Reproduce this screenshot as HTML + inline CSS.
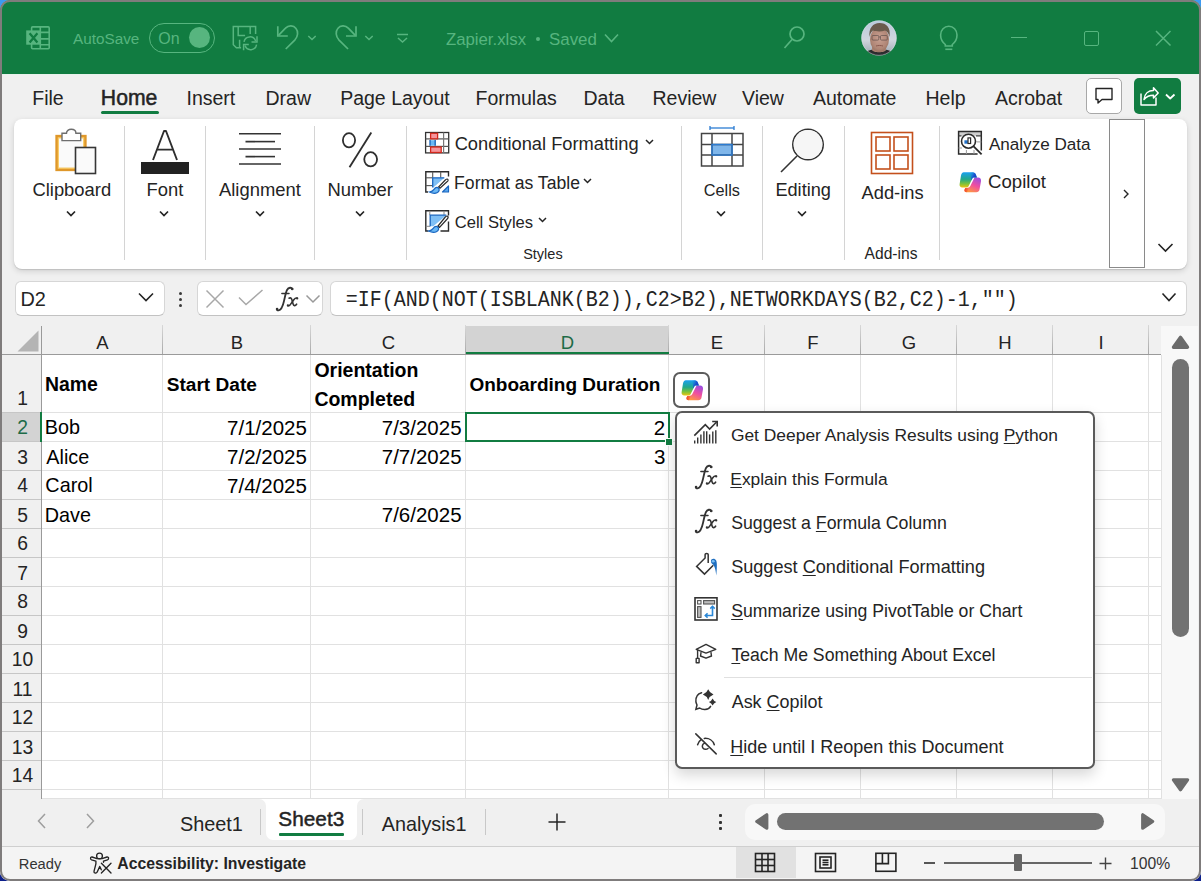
<!DOCTYPE html>
<html><head><meta charset="utf-8"><style>
html,body{margin:0;padding:0;width:1201px;height:881px;overflow:hidden;}
body{background:linear-gradient(180deg,#3d9af2 0%,#2a6fe0 50%,#0d1f8a 100%);position:relative;}
u{text-decoration:underline;text-decoration-thickness:1px;text-underline-offset:2px;}
</style></head><body>
<div style="position:absolute;left:0;top:0;width:1201px;height:881px;border-radius:10px;overflow:hidden;background:#f0f0f0;">
<div style="position:absolute;left:0px;top:0px;width:1201px;height:74px;background:#117c41;"></div><div style="position:absolute;left:0px;top:74px;width:1201px;height:1px;background:#e8f2ec;"></div><svg style="position:absolute;left:24px;top:25px;" width="28" height="26" viewBox="0 0 28 26"><g fill="none" stroke="#57b57f" stroke-width="1.6">
<rect x="7.6" y="1.9" width="17.6" height="21.9" rx="1"/>
<line x1="16.3" y1="1.9" x2="16.3" y2="23.8"/>
<line x1="16.3" y1="7.4" x2="25.2" y2="7.4"/><line x1="16.3" y1="13.9" x2="25.2" y2="13.9"/><line x1="16.3" y1="19.7" x2="25.2" y2="19.7"/>
</g>
<rect x="2.2" y="5.4" width="14.3" height="14.3" fill="#57b57f"/>
<path d="M5.6 8.3 L13.4 17.6 M13.4 8.3 L5.6 17.6" stroke="#117c41" stroke-width="2.3"/></svg><div style="position:absolute;left:149px;top:23.3px;width:65.5px;height:29.5px;box-sizing:border-box;border:1.6px solid #57b57f;border-radius:15px;"></div><div style="position:absolute;left:189px;top:26.8px;width:21px;height:21px;border-radius:50%;background:#57b57f;"></div><svg style="position:absolute;left:228px;top:22px;" width="34" height="32" viewBox="0 0 34 32"><g fill="none" stroke="#57b57f" stroke-width="1.5">
<path d="M13.1 25.8 H8.4 L5.3 22.7 V4.5 H27.6 V12"/>
<path d="M10.2 4.5 V13.5 H17.1 M22.2 4.5 V12"/>
<path d="M11.6 17.8 V25.8"/>
<path d="M16 19.8 A6 6 0 0 1 27.6 19"/><path d="M29 14.3 V20 H23.5"/>
<path d="M28.6 22.6 A6 6 0 0 1 17 23.6"/><path d="M15.6 28.2 V22.6 H20.8"/>
</g></svg><svg style="position:absolute;left:272px;top:22px;" width="34" height="32" viewBox="0 0 34 32"><g fill="none" stroke="#57b57f" stroke-width="1.7">
<path d="M5.8 4.2 V14 H15.8"/>
<path d="M6.5 13.3 L13.5 6.2 C16.5 3 21.5 3.2 24 6.5 C26.5 9.5 26 14.5 23 17.8 L13.75 27"/></g></svg><svg style="position:absolute;left:300px;top:22px;" width="16" height="32" viewBox="0 0 16 32"><path d="M8.3 14 L12 17.5 L15.7 14" fill="none" stroke="#57b57f" stroke-width="1.5"/></svg><svg style="position:absolute;left:328px;top:22px;" width="34" height="32" viewBox="0 0 34 32"><g transform="translate(33.8,0) scale(-1,1)"><g fill="none" stroke="#57b57f" stroke-width="1.7">
<path d="M5.8 4.2 V14 H15.8"/>
<path d="M6.5 13.3 L13.5 6.2 C16.5 3 21.5 3.2 24 6.5 C26.5 9.5 26 14.5 23 17.8 L13.75 27"/></g></g></svg><svg style="position:absolute;left:357px;top:22px;" width="16" height="32" viewBox="0 0 16 32"><path d="M8.3 14 L12 17.5 L15.7 14" fill="none" stroke="#57b57f" stroke-width="1.5"/></svg><svg style="position:absolute;left:395px;top:32px;" width="15" height="12" viewBox="0 0 15 12"><g fill="none" stroke="#57b57f" stroke-width="1.5"><line x1="2" y1="2.5" x2="13" y2="2.5"/><path d="M3 6 L7.5 10 L12 6"/></g></svg><div style="position:absolute;left:536px;top:37px;width:4.2px;height:4.2px;border-radius:50%;background:#57b57f;"></div><svg style="position:absolute;left:603px;top:32px;" width="17" height="12" viewBox="0 0 17 12"><path d="M2 2.5 L8.5 9.5 L15 2.5" fill="none" stroke="#57b57f" stroke-width="1.6"/></svg><svg style="position:absolute;left:782px;top:25px;" width="24" height="25" viewBox="0 0 24 25"><g fill="none" stroke="#57b57f" stroke-width="1.7"><circle cx="15" cy="9" r="7"/><line x1="10" y1="14.5" x2="2.5" y2="23"/></g></svg><svg style="position:absolute;left:861px;top:20px;" width="36" height="36" viewBox="0 0 36 36"><defs><clipPath id="avc"><circle cx="18" cy="18" r="17.6"/></clipPath>
<radialGradient id="avf" cx="0.5" cy="0.45" r="0.6"><stop offset="0" stop-color="#c9a092"/><stop offset="0.7" stop-color="#b08676"/><stop offset="1" stop-color="#92705f"/></radialGradient>
<linearGradient id="avb" x1="0" y1="0" x2="0" y2="1"><stop offset="0" stop-color="#b9c8da"/><stop offset="0.55" stop-color="#d0d6de"/><stop offset="1" stop-color="#9aa3ad"/></linearGradient></defs>
<g clip-path="url(#avc)">
<rect width="36" height="36" fill="url(#avb)"/>
<path d="M2 36 C4 31 9 29 18 29 C27 29 32 31 34 36 Z" fill="#2c2c2e"/>
<path d="M11 30 C12 33 24 33 25 30 V26 H11 Z" fill="#a98070"/>
<ellipse cx="18.5" cy="19.5" rx="9.5" ry="12.5" fill="url(#avf)"/>
<path d="M8.5 17 C7.5 8 12 3 18.5 3 C25.5 3 30 7.5 28.5 17 C27.5 13 26 11 24 10.5 C20 12 15 11.5 12 10.5 C10 12 9 14 8.5 17 Z" fill="#6a5a4c"/>
<g fill="none" stroke="#4a4040" stroke-width="0.7" opacity="0.8"><rect x="11" y="15.5" width="6.8" height="4.6" rx="1"/><rect x="19.5" y="15.5" width="6.8" height="4.6" rx="1"/><line x1="17.8" y1="17" x2="19.5" y2="17"/></g>
<path d="M15 26 C17 25.3 20 25.3 22 26" stroke="#8a5a50" stroke-width="1" fill="none"/>
</g>
<circle cx="18" cy="18" r="17.3" fill="none" stroke="#d8e6ea" stroke-width="0.6" opacity="0.7"/></svg><svg style="position:absolute;left:937px;top:24px;" width="24" height="28" viewBox="0 0 24 28"><g fill="none" stroke="#57b57f" stroke-width="1.6">
<path d="M8.3 20.5 C5.8 18.5 3.6 15.5 3.6 11 C3.6 6 7.3 2.3 11.8 2.3 C16.3 2.3 20 6 20 11 C20 15.5 17.8 18.5 15.3 20.5 V22 H8.3 Z"/>
<line x1="8.3" y1="25.3" x2="15.3" y2="25.3"/>
</g></svg><div style="position:absolute;left:1011px;top:36.5px;width:16px;height:1.5px;background:#57b57f;"></div><div style="position:absolute;left:1083.5px;top:30.5px;width:15px;height:15px;box-sizing:border-box;border:1.5px solid #57b57f;border-radius:2px;"></div><svg style="position:absolute;left:1154px;top:29px;" width="18" height="18" viewBox="0 0 18 18"><path d="M2 2 L16.5 16.5 M16.5 2 L2 16.5" stroke="#57b57f" stroke-width="1.5"/></svg><div style="position:absolute;left:0px;top:75px;width:1201px;height:252px;background:#f0f0f0;"></div><div style="position:absolute;left:101px;top:110.5px;width:58px;height:3px;background:#117c41;border-radius:2px;"></div><div style="position:absolute;left:1086px;top:78px;width:36px;height:36px;box-sizing:border-box;background:#fff;border:1px solid #a8a8a8;border-radius:5px;"></div><svg style="position:absolute;left:1094px;top:87px;" width="20" height="18" viewBox="0 0 20 18"><path d="M2 1.5 H18 V12.5 H8 L4 16 V12.5 H2 Z" fill="none" stroke="#242424" stroke-width="1.4" stroke-linejoin="round"/></svg><div style="position:absolute;left:1134px;top:78px;width:47px;height:36px;background:#117c41;border-radius:5px;"></div><svg style="position:absolute;left:1134px;top:78px;" width="46" height="36" viewBox="0 0 46 36"><g fill="none" stroke="#fff" stroke-width="1.5" stroke-linejoin="round">
<path d="M7 15.5 V27 H22 V19.5"/>
<path d="M10 21.5 C10.5 15.5 14.5 12.5 19.5 12.5 V9.8 L24.2 15 L19.5 20 V17.3 C15.5 17.3 12.5 18.5 10 21.5 Z"/>
<path d="M32 16.5 L36.2 20.5 L40.5 16.5" stroke-width="1.8"/>
</g></svg><div style="position:absolute;left:14px;top:119px;width:1172.5px;height:150px;background:#fff;border-radius:8px;box-shadow:0 1px 1px rgba(0,0,0,0.12),0 2px 6px rgba(0,0,0,0.14);"></div><div style="position:absolute;left:124px;top:126px;width:1px;height:134px;background:#d4d4d4;"></div><div style="position:absolute;left:205px;top:126px;width:1px;height:134px;background:#d4d4d4;"></div><div style="position:absolute;left:314px;top:126px;width:1px;height:134px;background:#d4d4d4;"></div><div style="position:absolute;left:406px;top:126px;width:1px;height:134px;background:#d4d4d4;"></div><div style="position:absolute;left:681px;top:126px;width:1px;height:134px;background:#d4d4d4;"></div><div style="position:absolute;left:762px;top:126px;width:1px;height:134px;background:#d4d4d4;"></div><div style="position:absolute;left:844px;top:126px;width:1px;height:134px;background:#d4d4d4;"></div><div style="position:absolute;left:939px;top:126px;width:1px;height:134px;background:#d4d4d4;"></div><div style="position:absolute;left:1109.3px;top:119.3px;width:35.3px;height:149px;box-sizing:border-box;border:1px solid #8a8a8a;background:#fff;"></div><svg style="position:absolute;left:1121px;top:188px;" width="10" height="12" viewBox="0 0 10 12"><path d="M3 2 L7 6 L3 10" fill="none" stroke="#242424" stroke-width="1.4"/></svg><svg style="position:absolute;left:1156px;top:241px;" width="19" height="13" viewBox="0 0 19 13"><path d="M2.5 3 L9.5 10 L16.5 3" fill="none" stroke="#242424" stroke-width="1.6"/></svg><svg style="position:absolute;left:52px;top:126px;" width="48" height="50" viewBox="0 0 48 50">
<rect x="5" y="10.5" width="28" height="33" fill="#fafafa" stroke="#df972a" stroke-width="3.3"/>
<rect x="6.3" y="11.8" width="25.4" height="30.4" fill="none" stroke="#fcd06a" stroke-width="1.1"/>
<path d="M10 14.6 V7.2 H14.5 C14.5 4.8 16.6 3.3 19.2 3.3 C21.8 3.3 23.9 4.8 23.9 7.2 H28.7 V14.6 Z" fill="#fff" stroke="#6e6e6e" stroke-width="1.4"/>
<rect x="23.5" y="21.5" width="20" height="26" fill="#fafafa" stroke="#363636" stroke-width="1.6"/>
</svg><svg style="position:absolute;left:65px;top:208.5px;" width="12" height="9" viewBox="0 0 12 9"><path d="M2 2.5 L6 6.5 L10 2.5" fill="none" stroke="#242424" stroke-width="1.7"/></svg><svg style="position:absolute;left:140px;top:127px;" width="51" height="49" viewBox="0 0 51 49"><path d="M13 33 L24 4 H26 L37 33 M17.3 22.6 H32.7" fill="none" stroke="#2e2e2e" stroke-width="1.9" stroke-linejoin="round"/>
<rect x="1" y="35" width="48" height="12" fill="#222"/></svg><svg style="position:absolute;left:158px;top:208.5px;" width="12" height="9" viewBox="0 0 12 9"><path d="M2 2.5 L6 6.5 L10 2.5" fill="none" stroke="#242424" stroke-width="1.7"/></svg><svg style="position:absolute;left:237px;top:131px;" width="46" height="36" viewBox="0 0 46 36"><g stroke="#333" stroke-width="1.6"><line x1="2" y1="2.7" x2="44" y2="2.7"/><line x1="8.5" y1="10.6" x2="38" y2="10.6"/><line x1="2" y1="18" x2="44" y2="18"/><line x1="8.5" y1="25.6" x2="38" y2="25.6"/><line x1="2" y1="33" x2="44" y2="33"/></g></svg><svg style="position:absolute;left:253.5px;top:208.5px;" width="12" height="9" viewBox="0 0 12 9"><path d="M2 2.5 L6 6.5 L10 2.5" fill="none" stroke="#242424" stroke-width="1.7"/></svg><svg style="position:absolute;left:340px;top:130px;" width="40" height="40" viewBox="0 0 40 40"><g fill="none" stroke="#2e2e2e" stroke-width="1.8"><ellipse cx="9" cy="10.3" rx="6.1" ry="7.1"/><ellipse cx="30.65" cy="29.3" rx="6.4" ry="7.1"/><line x1="31.3" y1="2.5" x2="9.5" y2="37.2"/></g></svg><svg style="position:absolute;left:353.5px;top:208.5px;" width="12" height="9" viewBox="0 0 12 9"><path d="M2 2.5 L6 6.5 L10 2.5" fill="none" stroke="#242424" stroke-width="1.7"/></svg><svg style="position:absolute;left:420px;top:126px;" width="36" height="32" viewBox="0 0 36 32">
<rect x="5.6" y="6.5" width="23.1" height="20.4" fill="#fff" stroke="#333" stroke-width="1.3"/>
<g stroke="#555" stroke-width="1.2"><line x1="5.6" y1="12.9" x2="28.7" y2="12.9"/><line x1="5.6" y1="20.4" x2="28.7" y2="20.4"/></g>
<line x1="23.6" y1="6.5" x2="23.6" y2="26.9" stroke="#777" stroke-width="1.2"/>
<rect x="10.6" y="7.3" width="7" height="5.5" fill="#f6949b" stroke="#d2281c" stroke-width="1.3"/>
<rect x="10.6" y="21" width="10.6" height="5.5" fill="#f6949b" stroke="#d2281c" stroke-width="1.3"/>
<rect x="10" y="14.2" width="5.3" height="5.5" fill="#6ab8f5"/>
<g stroke="#1461b8" stroke-width="1.3"><line x1="10" y1="14" x2="10" y2="19.8"/><line x1="15.2" y1="14" x2="15.2" y2="19.8"/></g>
</svg><svg style="position:absolute;left:643px;top:137px;" width="13" height="10" viewBox="0 0 13 10"><path d="M3 3 L6.5 6.5 L10 3" fill="none" stroke="#242424" stroke-width="1.5"/></svg><svg style="position:absolute;left:420px;top:166px;" width="36" height="32" viewBox="0 0 36 32">
<path d="M8 26 H5.8 V5.8 H28.5 V10.5" fill="none" stroke="#2b2b2b" stroke-width="1.4"/>
<g stroke="#555" stroke-width="1.1"><line x1="5.8" y1="11.8" x2="13" y2="11.8"/><line x1="5.8" y1="19.6" x2="13" y2="19.6"/><line x1="12.7" y1="5.8" x2="12.7" y2="11.8"/><line x1="20.7" y1="5.8" x2="20.7" y2="11.8"/></g>
<path d="M12.7 11.8 H24.5 L13 21.8 Z" fill="#7fbff5"/>
<path d="M24.3 11.8 H12.7 V21.5" fill="none" stroke="#1a66c0" stroke-width="1.3"/>
<path d="M22.5 26 L28.5 20 V26 Z" fill="#5aa8ee" stroke="#1a66c0" stroke-width="1.2" stroke-linejoin="round"/>
<path d="M27.6 13.2 C28.6 14.2 28 15 27 15.8 L20 22.3 L18.6 21 L25.3 14 C26.2 13.2 26.9 12.6 27.6 13.2 Z" fill="#fff" stroke="#2b2b2b" stroke-width="1.2"/>
<path d="M17.8 21.6 C19.8 22.6 19.8 25.5 17 26.8 C15 27.7 12.5 27.5 9.5 26 C12 25.6 13 24.8 14 23.3 C15 21.8 16.4 21 17.8 21.6 Z" fill="#6ab8f5" stroke="#1a66c0" stroke-width="1.2"/>
</svg><svg style="position:absolute;left:581px;top:176px;" width="13" height="10" viewBox="0 0 13 10"><path d="M3 3 L6.5 6.5 L10 3" fill="none" stroke="#242424" stroke-width="1.5"/></svg><svg style="position:absolute;left:420px;top:205px;" width="36" height="32" viewBox="0 0 36 32">
<path d="M8.5 26 H5.8 V5.8 H28.5 V10.5 M28.5 16.5 V26 H20.5" fill="none" stroke="#2b2b2b" stroke-width="1.4"/>
<g stroke="#888" stroke-width="1"><line x1="9.8" y1="5.8" x2="9.8" y2="10.2"/><line x1="24" y1="5.8" x2="24" y2="10.2"/><line x1="5.8" y1="21.3" x2="10.2" y2="21.3"/></g>
<path d="M10.2 10.2 H26.3 L13.3 21.3 H10.2 Z" fill="#7fbff5"/>
<path d="M26.3 10.2 H10.2 V21.3" fill="none" stroke="#1a66c0" stroke-width="1.3"/>
<path d="M27.6 11.2 C28.6 12.2 28.2 13 27.2 14 L19.5 22.3 L18 21 L25.3 12 C26.2 11.2 26.9 10.6 27.6 11.2 Z" fill="#fff" stroke="#2b2b2b" stroke-width="1.2"/>
<path d="M17.2 21.6 C19.2 22.6 19.2 25.5 16.4 26.8 C14.4 27.7 11.5 27.5 8.5 26 C11 25.6 12.2 24.8 13.2 23.3 C14.2 21.8 15.8 21 17.2 21.6 Z" fill="#6ab8f5" stroke="#1a66c0" stroke-width="1.2"/>
</svg><svg style="position:absolute;left:536px;top:215px;" width="13" height="10" viewBox="0 0 13 10"><path d="M3 3 L6.5 6.5 L10 3" fill="none" stroke="#242424" stroke-width="1.5"/></svg><svg style="position:absolute;left:700px;top:124px;" width="45" height="44" viewBox="0 0 45 44">
<g stroke="#2b7cd3" stroke-width="1.3"><line x1="10" y1="4" x2="34" y2="4"/><line x1="10" y1="2" x2="10" y2="6"/><line x1="34" y1="2" x2="34" y2="6"/></g>
<rect x="12" y="20.5" width="20" height="10.5" fill="#7fb6ea"/>
<g stroke="#444" stroke-width="1.5" fill="none"><rect x="1.5" y="9.5" width="41.5" height="32.5"/><line x1="12" y1="9.5" x2="12" y2="42"/><line x1="32" y1="9.5" x2="32" y2="42"/><line x1="1.5" y1="20.5" x2="43" y2="20.5"/><line x1="1.5" y1="31" x2="43" y2="31"/></g>
<rect x="12" y="20.5" width="20" height="10.5" fill="none" stroke="#2b7cd3" stroke-width="1.5"/>
</svg><svg style="position:absolute;left:715px;top:208.5px;" width="12" height="9" viewBox="0 0 12 9"><path d="M2 2.5 L6 6.5 L10 2.5" fill="none" stroke="#242424" stroke-width="1.7"/></svg><svg style="position:absolute;left:778px;top:127px;" width="48" height="48" viewBox="0 0 48 48"><g fill="none" stroke="#333" stroke-width="1.6"><circle cx="30" cy="17.5" r="15.2"/><line x1="19" y1="29" x2="3" y2="45"/></g><circle cx="30" cy="17.5" r="14.4" fill="#f6f6f6"/></svg><svg style="position:absolute;left:796px;top:208.5px;" width="12" height="9" viewBox="0 0 12 9"><path d="M2 2.5 L6 6.5 L10 2.5" fill="none" stroke="#242424" stroke-width="1.7"/></svg><svg style="position:absolute;left:869px;top:130px;" width="46" height="46" viewBox="0 0 46 46"><g fill="none" stroke="#c4501c" stroke-width="1.6"><rect x="2.5" y="2.5" width="41" height="41"/><rect x="7" y="7" width="14" height="14"/><rect x="25" y="7" width="14" height="14"/><rect x="7" y="25" width="14" height="14"/><rect x="25" y="25" width="14" height="14"/></g></svg><svg style="position:absolute;left:954px;top:127px;" width="32" height="32" viewBox="0 0 32 32">
<rect x="5" y="5" width="22.2" height="4" fill="#cfcfcf"/>
<path d="M23.6 27 H4.6 V4.6 H27.3 V23.6" fill="none" stroke="#2b2b2b" stroke-width="1.5"/>
<g stroke="#3a3a3a" stroke-width="1.2"><line x1="4.6" y1="8.9" x2="7.5" y2="8.9"/><line x1="22" y1="8.9" x2="27.3" y2="8.9"/></g>
<g stroke="#9a9a9a" stroke-width="1"><line x1="12.4" y1="23" x2="12.4" y2="27"/><line x1="20" y1="23" x2="20" y2="27"/><line x1="22.5" y1="14.9" x2="27.3" y2="14.9"/><line x1="4.6" y1="21" x2="8" y2="21"/></g>
<circle cx="14.5" cy="14.2" r="7" fill="#fff" stroke="#2b2b2b" stroke-width="1.6"/>
<line x1="19.6" y1="19.4" x2="27.6" y2="27.4" stroke="#2b2b2b" stroke-width="1.9"/>
<rect x="10.4" y="13.3" width="3.4" height="3.4" fill="#1f6fc8"/>
<rect x="14" y="10.9" width="2.6" height="5.6" fill="#fff" stroke="#2b2b2b" stroke-width="1.2"/>
</svg><svg style="position:absolute;left:958.8px;top:171.5px;" width="23" height="21" viewBox="0 0 23 21"><defs>
<linearGradient id="crA" x1="0" y1="0" x2="0" y2="1"><stop offset="0" stop-color="#1aa0f0"/><stop offset="0.45" stop-color="#22a88a"/><stop offset="0.75" stop-color="#7cc23a"/><stop offset="1" stop-color="#f2c40f"/></linearGradient>
<linearGradient id="crB" x1="0.8" y1="0" x2="0.3" y2="1"><stop offset="0" stop-color="#9a4de0"/><stop offset="0.5" stop-color="#f04fa0"/><stop offset="1" stop-color="#ff9a3e"/></linearGradient>
<linearGradient id="crC" x1="0" y1="0" x2="1" y2="0.6"><stop offset="0" stop-color="#1a8ce8" stop-opacity="0"/><stop offset="0.6" stop-color="#1a4fd0"/><stop offset="1" stop-color="#1a3cc0"/></linearGradient>
<linearGradient id="crD" x1="0" y1="0" x2="1" y2="0"><stop offset="0" stop-color="#f0402a"/><stop offset="1" stop-color="#f0402a" stop-opacity="0"/></linearGradient>
</defs>
<g transform="translate(0.5,0.3)">
<path d="M16.3 5.3 H18.6 C20.6 5.3 21.9 7 21.5 9 L20 17.2 C19.7 18.9 18.5 20 16.8 20 H7.2 C5.5 20 4.5 18.8 5.1 17.3 L5.8 15.6 H7.6 C9 15.6 10.2 14.9 10.8 13.6 L14.3 6.6 C14.7 5.8 15.4 5.3 16.3 5.3 Z" fill="url(#crB)"/>
<path d="M5.8 15.6 H7.6 C8.5 15.6 9.2 15.3 9.8 14.8 L7.6 20 H7.2 C5.5 20 4.5 18.8 5.1 17.3 Z" fill="url(#crD)"/>
<path d="M4.3 0 H13 C14.8 0 15.9 1 16.5 2.6 L17.4 5.3 H14.4 C13.6 5.3 13 5.8 12.7 6.5 L9.2 13.6 C8.6 14.8 7.7 15.3 6.5 15.3 H2.8 C1 15.3 -0.3 13.8 0.1 12 L1.5 3.2 C1.8 1.3 2.8 0 4.3 0 Z" fill="url(#crA)"/>
<path d="M10.5 0 H13 C14.8 0 15.9 1 16.5 2.6 L17.4 5.3 H14.4 C13.6 5.3 13 5.8 12.7 6.5 L11.8 8.3 Z" fill="url(#crC)"/>
</g></svg><div style="position:absolute;left:14.5px;top:281px;width:150.5px;height:35px;box-sizing:border-box;background:#fff;border:1px solid #d6d6d6;border-bottom-color:#c2c2c2;border-radius:6px;"></div><svg style="position:absolute;left:136px;top:290px;" width="20" height="14" viewBox="0 0 20 14"><path d="M3 3.5 L10 10.5 L17 3.5" fill="none" stroke="#242424" stroke-width="1.6"/></svg><div style="position:absolute;left:179px;top:291.5px;width:3.2px;height:3.2px;background:#3a3a3a;border-radius:50%;"></div><div style="position:absolute;left:179px;top:297.5px;width:3.2px;height:3.2px;background:#3a3a3a;border-radius:50%;"></div><div style="position:absolute;left:179px;top:303.5px;width:3.2px;height:3.2px;background:#3a3a3a;border-radius:50%;"></div><div style="position:absolute;left:196.5px;top:281px;width:126.5px;height:35px;box-sizing:border-box;background:#fff;border:1px solid #d6d6d6;border-bottom-color:#c2c2c2;border-radius:6px;"></div><svg style="position:absolute;left:204px;top:288px;" width="22" height="22" viewBox="0 0 22 22"><path d="M2.5 2.5 L19.5 19.5 M19.5 2.5 L2.5 19.5" stroke="#a8a8a8" stroke-width="1.5"/></svg><svg style="position:absolute;left:237px;top:288px;" width="28" height="20" viewBox="0 0 28 20"><path d="M2 9.5 L9 16.5 L25.5 2" fill="none" stroke="#a8a8a8" stroke-width="1.5"/></svg><svg style="position:absolute;left:304px;top:293px;" width="18" height="12" viewBox="0 0 18 12"><path d="M2.5 2.5 L9 9 L15.5 2.5" fill="none" stroke="#999" stroke-width="1.5"/></svg><div style="position:absolute;left:330px;top:281px;width:856.5px;height:35px;box-sizing:border-box;background:#fff;border:1px solid #d6d6d6;border-bottom-color:#c2c2c2;border-radius:6px;"></div><svg style="position:absolute;left:1160px;top:291px;" width="18" height="12" viewBox="0 0 18 12"><path d="M2.5 2.5 L9 9.5 L15.5 2.5" fill="none" stroke="#242424" stroke-width="1.6"/></svg><div style="position:absolute;left:2px;top:326px;width:1159px;height:28px;background:#f0f0f0;"></div><div style="position:absolute;left:2px;top:354px;width:39px;height:445px;background:#f0f0f0;"></div><div style="position:absolute;left:42px;top:355px;width:1119px;height:444px;background:#fff;"></div><div style="position:absolute;left:466px;top:326px;width:203px;height:28px;background:#d3d3d3;"></div><div style="position:absolute;left:466px;top:352px;width:203px;height:2px;background:#117c41;"></div><div style="position:absolute;left:2px;top:413px;width:39px;height:28px;background:#d3d3d3;"></div><div style="position:absolute;left:40px;top:412px;width:2px;height:30px;background:#117c41;"></div><div style="position:absolute;left:162px;top:355px;width:1px;height:444px;background:#e1e1e1;"></div><div style="position:absolute;left:162px;top:325px;width:1px;height:29px;background:linear-gradient(#d8d8d8,#a8a8a8);"></div><div style="position:absolute;left:310px;top:355px;width:1px;height:444px;background:#e1e1e1;"></div><div style="position:absolute;left:310px;top:325px;width:1px;height:29px;background:linear-gradient(#d8d8d8,#a8a8a8);"></div><div style="position:absolute;left:465px;top:355px;width:1px;height:444px;background:#e1e1e1;"></div><div style="position:absolute;left:465px;top:325px;width:1px;height:29px;background:linear-gradient(#d8d8d8,#a8a8a8);"></div><div style="position:absolute;left:668px;top:355px;width:1px;height:444px;background:#e1e1e1;"></div><div style="position:absolute;left:668px;top:325px;width:1px;height:29px;background:linear-gradient(#d8d8d8,#a8a8a8);"></div><div style="position:absolute;left:764px;top:355px;width:1px;height:444px;background:#e1e1e1;"></div><div style="position:absolute;left:764px;top:325px;width:1px;height:29px;background:linear-gradient(#d8d8d8,#a8a8a8);"></div><div style="position:absolute;left:860px;top:355px;width:1px;height:444px;background:#e1e1e1;"></div><div style="position:absolute;left:860px;top:325px;width:1px;height:29px;background:linear-gradient(#d8d8d8,#a8a8a8);"></div><div style="position:absolute;left:956px;top:355px;width:1px;height:444px;background:#e1e1e1;"></div><div style="position:absolute;left:956px;top:325px;width:1px;height:29px;background:linear-gradient(#d8d8d8,#a8a8a8);"></div><div style="position:absolute;left:1052px;top:355px;width:1px;height:444px;background:#e1e1e1;"></div><div style="position:absolute;left:1052px;top:325px;width:1px;height:29px;background:linear-gradient(#d8d8d8,#a8a8a8);"></div><div style="position:absolute;left:1148px;top:355px;width:1px;height:444px;background:#e1e1e1;"></div><div style="position:absolute;left:1148px;top:325px;width:1px;height:29px;background:linear-gradient(#d8d8d8,#a8a8a8);"></div><div style="position:absolute;left:41px;top:326px;width:1px;height:473px;background:#9a9a9a;"></div><div style="position:absolute;left:42px;top:412px;width:1119px;height:1px;background:#e1e1e1;"></div><div style="position:absolute;left:2px;top:412px;width:39px;height:1px;background:#c6c6c6;"></div><div style="position:absolute;left:42px;top:441px;width:1119px;height:1px;background:#e1e1e1;"></div><div style="position:absolute;left:2px;top:441px;width:39px;height:1px;background:#c6c6c6;"></div><div style="position:absolute;left:42px;top:470px;width:1119px;height:1px;background:#e1e1e1;"></div><div style="position:absolute;left:2px;top:470px;width:39px;height:1px;background:#c6c6c6;"></div><div style="position:absolute;left:42px;top:499px;width:1119px;height:1px;background:#e1e1e1;"></div><div style="position:absolute;left:2px;top:499px;width:39px;height:1px;background:#c6c6c6;"></div><div style="position:absolute;left:42px;top:528px;width:1119px;height:1px;background:#e1e1e1;"></div><div style="position:absolute;left:2px;top:528px;width:39px;height:1px;background:#c6c6c6;"></div><div style="position:absolute;left:42px;top:557px;width:1119px;height:1px;background:#e1e1e1;"></div><div style="position:absolute;left:2px;top:557px;width:39px;height:1px;background:#c6c6c6;"></div><div style="position:absolute;left:42px;top:586px;width:1119px;height:1px;background:#e1e1e1;"></div><div style="position:absolute;left:2px;top:586px;width:39px;height:1px;background:#c6c6c6;"></div><div style="position:absolute;left:42px;top:615px;width:1119px;height:1px;background:#e1e1e1;"></div><div style="position:absolute;left:2px;top:615px;width:39px;height:1px;background:#c6c6c6;"></div><div style="position:absolute;left:42px;top:644px;width:1119px;height:1px;background:#e1e1e1;"></div><div style="position:absolute;left:2px;top:644px;width:39px;height:1px;background:#c6c6c6;"></div><div style="position:absolute;left:42px;top:673px;width:1119px;height:1px;background:#e1e1e1;"></div><div style="position:absolute;left:2px;top:673px;width:39px;height:1px;background:#c6c6c6;"></div><div style="position:absolute;left:42px;top:702px;width:1119px;height:1px;background:#e1e1e1;"></div><div style="position:absolute;left:2px;top:702px;width:39px;height:1px;background:#c6c6c6;"></div><div style="position:absolute;left:42px;top:731px;width:1119px;height:1px;background:#e1e1e1;"></div><div style="position:absolute;left:2px;top:731px;width:39px;height:1px;background:#c6c6c6;"></div><div style="position:absolute;left:42px;top:760px;width:1119px;height:1px;background:#e1e1e1;"></div><div style="position:absolute;left:2px;top:760px;width:39px;height:1px;background:#c6c6c6;"></div><div style="position:absolute;left:42px;top:789px;width:1119px;height:1px;background:#e1e1e1;"></div><div style="position:absolute;left:2px;top:789px;width:39px;height:1px;background:#c6c6c6;"></div><div style="position:absolute;left:42px;top:818px;width:1119px;height:1px;background:#e1e1e1;"></div><div style="position:absolute;left:2px;top:818px;width:39px;height:1px;background:#c6c6c6;"></div><div style="position:absolute;left:2px;top:354px;width:1159px;height:1px;background:#9a9a9a;"></div><div style="position:absolute;left:466px;top:352px;width:203px;height:2px;background:#117c41;"></div><div style="position:absolute;left:2px;top:412px;width:39px;height:1px;background:#c6c6c6;"></div><div style="position:absolute;left:40px;top:412px;width:2px;height:30px;background:#117c41;"></div><svg style="position:absolute;left:16px;top:329px;" width="24" height="24" viewBox="0 0 24 24"><path d="M22.5 1.5 V22.5 H1.5 Z" fill="#b4b4b4"/></svg><div style="position:absolute;left:465px;top:412px;width:205px;height:30px;box-sizing:border-box;border:2px solid #117c41;"></div><div style="position:absolute;left:665px;top:438px;width:6px;height:6px;background:#117c41;border:1px solid #fff;"></div><div style="position:absolute;left:1161px;top:326px;width:37px;height:473px;background:#f8f8f8;"></div><svg style="position:absolute;left:1170px;top:334px;" width="21" height="17" viewBox="0 0 21 17"><path d="M10.5 3.3 L17.6 13.3 H3.4 Z" fill="#6b6b6b" stroke="#6b6b6b" stroke-width="3.2" stroke-linejoin="round"/></svg><div style="position:absolute;left:1172px;top:359px;width:17px;height:278px;background:#727272;border-radius:9px;"></div><svg style="position:absolute;left:1170px;top:776px;" width="21" height="17" viewBox="0 0 21 17"><path d="M10.5 13.7 L17.6 3.8 H3.4 Z" fill="#6b6b6b" stroke="#6b6b6b" stroke-width="3.2" stroke-linejoin="round"/></svg><div style="position:absolute;left:673.3px;top:371.7px;width:37.2px;height:36.3px;box-sizing:border-box;background:#fff;border:2px solid #5c5c5c;border-radius:7px;"></div><svg style="position:absolute;left:680.8px;top:379.7px;" width="23" height="21" viewBox="0 0 23 21"><defs>
<linearGradient id="cbA" x1="0" y1="0" x2="0" y2="1"><stop offset="0" stop-color="#1aa0f0"/><stop offset="0.45" stop-color="#22a88a"/><stop offset="0.75" stop-color="#7cc23a"/><stop offset="1" stop-color="#f2c40f"/></linearGradient>
<linearGradient id="cbB" x1="0.8" y1="0" x2="0.3" y2="1"><stop offset="0" stop-color="#9a4de0"/><stop offset="0.5" stop-color="#f04fa0"/><stop offset="1" stop-color="#ff9a3e"/></linearGradient>
<linearGradient id="cbC" x1="0" y1="0" x2="1" y2="0.6"><stop offset="0" stop-color="#1a8ce8" stop-opacity="0"/><stop offset="0.6" stop-color="#1a4fd0"/><stop offset="1" stop-color="#1a3cc0"/></linearGradient>
<linearGradient id="cbD" x1="0" y1="0" x2="1" y2="0"><stop offset="0" stop-color="#f0402a"/><stop offset="1" stop-color="#f0402a" stop-opacity="0"/></linearGradient>
</defs>
<g transform="translate(0.5,0.3)">
<path d="M16.3 5.3 H18.6 C20.6 5.3 21.9 7 21.5 9 L20 17.2 C19.7 18.9 18.5 20 16.8 20 H7.2 C5.5 20 4.5 18.8 5.1 17.3 L5.8 15.6 H7.6 C9 15.6 10.2 14.9 10.8 13.6 L14.3 6.6 C14.7 5.8 15.4 5.3 16.3 5.3 Z" fill="url(#cbB)"/>
<path d="M5.8 15.6 H7.6 C8.5 15.6 9.2 15.3 9.8 14.8 L7.6 20 H7.2 C5.5 20 4.5 18.8 5.1 17.3 Z" fill="url(#cbD)"/>
<path d="M4.3 0 H13 C14.8 0 15.9 1 16.5 2.6 L17.4 5.3 H14.4 C13.6 5.3 13 5.8 12.7 6.5 L9.2 13.6 C8.6 14.8 7.7 15.3 6.5 15.3 H2.8 C1 15.3 -0.3 13.8 0.1 12 L1.5 3.2 C1.8 1.3 2.8 0 4.3 0 Z" fill="url(#cbA)"/>
<path d="M10.5 0 H13 C14.8 0 15.9 1 16.5 2.6 L17.4 5.3 H14.4 C13.6 5.3 13 5.8 12.7 6.5 L11.8 8.3 Z" fill="url(#cbC)"/>
</g></svg><div style="position:absolute;left:675px;top:411px;width:419.5px;height:358px;box-sizing:border-box;background:#fff;border:2px solid #5a5a5a;border-radius:7px;box-shadow:0 6px 14px rgba(0,0,0,0.16);"></div><div style="position:absolute;left:724px;top:677px;width:368px;height:1px;background:#e0e0e0;"></div><svg style="position:absolute;left:688px;top:415px;" width="36" height="36" viewBox="0 0 36 36"><g fill="none" stroke="#333333" stroke-width="1.6" stroke-linejoin="miter">
<path d="M6.3 20.6 L17.3 9.7 L21.6 14 L28.6 7"/><path d="M24.2 6.5 H29.2 V11.5"/></g>
<g stroke="#333333" stroke-width="1.4">
<line x1="6.7" y1="28.4" x2="6.7" y2="25.4"/><line x1="9.7" y1="28.4" x2="9.7" y2="22.4"/><line x1="12.9" y1="28.4" x2="12.9" y2="19.4"/><line x1="15.9" y1="28.4" x2="15.9" y2="16.3"/><line x1="18.7" y1="28.4" x2="18.7" y2="16.3"/><line x1="21.6" y1="28.4" x2="21.6" y2="19.4"/><line x1="24.8" y1="28.4" x2="24.8" y2="16.5"/><line x1="27.8" y1="28.4" x2="27.8" y2="15.3"/></g></svg><svg style="position:absolute;left:688px;top:460px;" width="36" height="36" viewBox="0 0 36 36"><g fill="none" stroke="#333333" stroke-linecap="round">
<path d="M23.4 7 C22.6 5.3 19.6 5 18 8 C16.7 10.5 16 15 15 19 C14 23.5 12.6 28 9.6 28.3 C8.3 28.4 7.6 27.8 7.8 27" stroke-width="1.8"/>
<path d="M12.9 11.6 H20" stroke-width="1.5"/>
<path d="M20 16.2 C21.4 15.4 22.4 16 23 18 L24 21.8 C24.6 24 26.2 24.3 27.6 22.2" stroke-width="1.6"/>
<path d="M28.2 16.2 C27 15.6 26 16.2 24.8 17.8 L21.3 22.6 C20.6 23.6 19.8 24 19 23.6" stroke-width="1.6"/>
</g>
<g fill="#333333"><circle cx="23.2" cy="7" r="1.3"/><circle cx="8.1" cy="27.1" r="1.3"/><circle cx="28.2" cy="16.4" r="1.15"/><circle cx="18.9" cy="23.5" r="1.15"/></g></svg><svg style="position:absolute;left:688px;top:504px;" width="36" height="36" viewBox="0 0 36 36"><g fill="none" stroke="#333333" stroke-linecap="round">
<path d="M23.4 7 C22.6 5.3 19.6 5 18 8 C16.7 10.5 16 15 15 19 C14 23.5 12.6 28 9.6 28.3 C8.3 28.4 7.6 27.8 7.8 27" stroke-width="1.8"/>
<path d="M12.9 11.6 H20" stroke-width="1.5"/>
<path d="M20 16.2 C21.4 15.4 22.4 16 23 18 L24 21.8 C24.6 24 26.2 24.3 27.6 22.2" stroke-width="1.6"/>
<path d="M28.2 16.2 C27 15.6 26 16.2 24.8 17.8 L21.3 22.6 C20.6 23.6 19.8 24 19 23.6" stroke-width="1.6"/>
</g>
<g fill="#333333"><circle cx="23.2" cy="7" r="1.3"/><circle cx="8.1" cy="27.1" r="1.3"/><circle cx="28.2" cy="16.4" r="1.15"/><circle cx="18.9" cy="23.5" r="1.15"/></g></svg><svg style="position:absolute;left:688px;top:548px;" width="36" height="36" viewBox="0 0 36 36"><g fill="none" stroke="#333333" stroke-width="1.5" stroke-linejoin="miter">
<path d="M20.2 15 V6.6 C20.2 5 17.1 5 17.1 6.6 V10 L8.6 18.4 L16.5 26.1 L25.3 17.3"/></g>
<path d="M23 12.8 C23.3 10.5 26.8 10 28.2 12.6 C29.2 14.8 29 20 28.3 27.5 C27.6 21.5 26.5 17.5 24.6 16.3 C23.4 15.5 22.8 14 23 12.8 Z" fill="#1f6fc0"/>
<ellipse cx="25.2" cy="13.2" rx="1.5" ry="1.2" fill="#7cc0f5"/></svg><svg style="position:absolute;left:688px;top:592px;" width="36" height="36" viewBox="0 0 36 36"><rect x="7" y="5.8" width="22" height="22.2" fill="#fff" stroke="#333333" stroke-width="1.6"/>
<rect x="9.6" y="8.6" width="3.4" height="3.4" fill="#fff" stroke="#555" stroke-width="1.1"/>
<rect x="15.6" y="8.6" width="11" height="3.4" fill="#bdbdbd" stroke="#555" stroke-width="1.1"/>
<rect x="9.6" y="14.6" width="3.4" height="10.8" fill="#bdbdbd" stroke="#555" stroke-width="1.1"/>
<g fill="none" stroke="#2b88d8" stroke-width="1.6"><path d="M24.5 14.5 V23.5 H17.5"/><path d="M22.3 16.6 L24.5 14.3 L26.7 16.6"/><path d="M19.6 21.3 L17.3 23.5 L19.6 25.7"/></g></svg><svg style="position:absolute;left:688px;top:636px;" width="36" height="36" viewBox="0 0 36 36"><g fill="none" stroke="#333333" stroke-width="1.4" stroke-linejoin="round">
<path d="M8.2 13.3 L18 8.4 L27.8 13.3 L18 17.1 Z"/>
<path d="M13.1 16.1 L12.5 20 L18 22.2 L23.5 20 L22.9 16.1"/>
<path d="M9.6 13.5 V22.2"/><rect x="8.2" y="22.4" width="2.9" height="4.3"/></g></svg><svg style="position:absolute;left:688px;top:683px;" width="36" height="36" viewBox="0 0 36 36"><g fill="none" stroke="#333333" stroke-width="1.5" stroke-linecap="round">
<path d="M13.6 9.8 C9.5 11 7.6 14.8 7.9 18.6 C8 20 8.6 21 9 22 L7.9 26.3 L11.6 25 C13 26 15 26.6 17 26.5 C19.6 26.3 21.6 25.2 22.6 23.4"/></g>
<path d="M20.2 6.3 Q21.7 10.1 25.5 11.6 Q21.7 13.1 20.2 16.9 Q18.7 13.1 14.9 11.6 Q18.7 10.1 20.2 6.3 Z" fill="#333333"/>
<path d="M24.6 15.5 Q25.6 18 28.3 19 Q25.6 20 24.6 22.5 Q23.6 20 20.9 19 Q23.6 18 24.6 15.5 Z" fill="#333333"/></svg><svg style="position:absolute;left:688px;top:727px;" width="36" height="36" viewBox="0 0 36 36"><g fill="none" stroke="#333333" stroke-width="1.5" stroke-linecap="round">
<path d="M7.8 6.9 L28.2 26.9"/>
<path d="M9.6 17.8 C10.3 15.5 11.5 13.8 13.1 12.7"/>
<path d="M16.3 11.4 C21 11 25 13.6 26.3 17.8"/>
<path d="M16.3 16.4 C14.5 17 13.8 19.2 14.8 20.8 C15.8 22.4 18.4 22.7 20 21.5"/></g></svg><svg style="position:absolute;left:269px;top:282px;" width="36" height="36" viewBox="0 0 36 36"><g fill="none" stroke="#333333" stroke-linecap="round">
<path d="M23.4 7 C22.6 5.3 19.6 5 18 8 C16.7 10.5 16 15 15 19 C14 23.5 12.6 28 9.6 28.3 C8.3 28.4 7.6 27.8 7.8 27" stroke-width="1.8"/>
<path d="M12.9 11.6 H20" stroke-width="1.5"/>
<path d="M20 16.2 C21.4 15.4 22.4 16 23 18 L24 21.8 C24.6 24 26.2 24.3 27.6 22.2" stroke-width="1.6"/>
<path d="M28.2 16.2 C27 15.6 26 16.2 24.8 17.8 L21.3 22.6 C20.6 23.6 19.8 24 19 23.6" stroke-width="1.6"/>
</g>
<g fill="#333333"><circle cx="23.2" cy="7" r="1.3"/><circle cx="8.1" cy="27.1" r="1.3"/><circle cx="28.2" cy="16.4" r="1.15"/><circle cx="18.9" cy="23.5" r="1.15"/></g></svg><div style="position:absolute;left:2px;top:799px;width:1196px;height:47px;background:#f0f0f0;"></div><div style="position:absolute;left:240px;top:799px;width:140px;height:14px;background:#fff;"></div><div style="position:absolute;left:42px;top:798px;width:1119px;height:1px;background:#e1e1e1;"></div><div style="position:absolute;left:1161px;top:355px;width:1px;height:444px;background:#e1e1e1;"></div><div style="position:absolute;left:2px;top:799px;width:264px;height:47px;background:#f0f0f0;border-top-right-radius:7px;"></div><div style="position:absolute;left:357px;top:799px;width:841px;height:47px;background:#f0f0f0;border-top-left-radius:7px;"></div><svg style="position:absolute;left:34px;top:811px;" width="16" height="20" viewBox="0 0 16 20"><path d="M11 3 L4.5 10 L11 17" fill="none" stroke="#9e9e9e" stroke-width="1.5"/></svg><svg style="position:absolute;left:82px;top:811px;" width="16" height="20" viewBox="0 0 16 20"><path d="M5 3 L11.5 10 L5 17" fill="none" stroke="#9e9e9e" stroke-width="1.5"/></svg><div style="position:absolute;left:260px;top:809px;width:1px;height:26px;background:#c8c8c8;"></div><div style="position:absolute;left:266px;top:799px;width:91px;height:41px;background:#fff;border-radius:0 0 7px 7px;"></div><div style="position:absolute;left:279px;top:833px;width:65px;height:3px;background:#117c41;border-radius:1px;"></div><div style="position:absolute;left:362px;top:809px;width:1px;height:26px;background:#c8c8c8;"></div><div style="position:absolute;left:485px;top:809px;width:1px;height:26px;background:#c8c8c8;"></div><svg style="position:absolute;left:546px;top:811px;" width="22" height="22" viewBox="0 0 22 22"><path d="M11 2.5 V19.5 M2.5 11 H19.5" stroke="#242424" stroke-width="1.5"/></svg><div style="position:absolute;left:719px;top:814px;width:3px;height:3px;background:#333;border-radius:1px;"></div><div style="position:absolute;left:719px;top:820.5px;width:3px;height:3px;background:#333;border-radius:1px;"></div><div style="position:absolute;left:719px;top:827px;width:3px;height:3px;background:#333;border-radius:1px;"></div><div style="position:absolute;left:745px;top:804.4px;width:419.5px;height:35.3px;background:#f8f8f8;border-radius:10px;"></div><svg style="position:absolute;left:752px;top:811px;" width="19" height="21" viewBox="0 0 19 21"><path d="M14.8 3.8 V17.2 L4.8 10.5 Z" fill="#6b6b6b" stroke="#6b6b6b" stroke-width="3.2" stroke-linejoin="round"/></svg><div style="position:absolute;left:777.2px;top:812.9px;width:326.8px;height:17px;background:#727272;border-radius:8.5px;"></div><svg style="position:absolute;left:1138px;top:811px;" width="19" height="21" viewBox="0 0 19 21"><path d="M4.7 3.8 V17.2 L14.7 10.5 Z" fill="#6b6b6b" stroke="#6b6b6b" stroke-width="3.2" stroke-linejoin="round"/></svg><div style="position:absolute;left:0px;top:846px;width:1201px;height:35px;background:#f4f4f4;"></div><div style="position:absolute;left:0px;top:846px;width:1201px;height:1px;background:#cfcfcf;"></div><svg style="position:absolute;left:85px;top:848px;" width="30" height="30" viewBox="0 0 30 30"><g fill="none" stroke="#242424" stroke-width="1.35" stroke-linejoin="round" stroke-linecap="round">
<circle cx="14.5" cy="8" r="2.9"/>
<path d="M16.3 21.8 L14.8 18.4 L12.2 24 C11.5 25.6 8.7 25.4 9 23.3 L10.9 15.8 V13.1 L6.6 11.9 C5 11.4 5.2 8.7 7.1 9 L12 10.6 H17 L22 9 C23.9 8.7 24.1 11.4 22.5 11.9 L18.5 13.1 V14.3"/>
<path d="M16.4 15.3 L26 25 M26 15.3 L16.4 25"/></g></svg><div style="position:absolute;left:736.3px;top:847px;width:59.3px;height:31px;background:#e1e1e1;"></div><svg style="position:absolute;left:754px;top:852px;" width="22" height="21" viewBox="0 0 22 21"><g fill="none" stroke="#242424" stroke-width="1.6"><rect x="1.5" y="1.5" width="19" height="18"/><line x1="8" y1="1.5" x2="8" y2="19.5"/><line x1="14" y1="1.5" x2="14" y2="19.5"/><line x1="1.5" y1="7.5" x2="20.5" y2="7.5"/><line x1="1.5" y1="13.5" x2="20.5" y2="13.5"/></g></svg><svg style="position:absolute;left:814px;top:852px;" width="23" height="21" viewBox="0 0 23 21"><g fill="none" stroke="#242424" stroke-width="1.6"><rect x="1.5" y="1.5" width="20" height="18"/><rect x="6" y="5" width="11" height="11"/><line x1="8.5" y1="8.2" x2="14.5" y2="8.2"/><line x1="8.5" y1="10.5" x2="14.5" y2="10.5"/><line x1="8.5" y1="12.8" x2="14.5" y2="12.8"/></g></svg><svg style="position:absolute;left:874px;top:852px;" width="23" height="21" viewBox="0 0 23 21"><g fill="none" stroke="#242424" stroke-width="1.6"><rect x="1.9" y="1.3" width="20" height="18"/><path d="M1.9 11.6 H14.4 V1.3 M8.4 1.3 V11.6"/></g></svg><div style="position:absolute;left:923.7px;top:862px;width:11.5px;height:1.5px;background:#555;"></div><div style="position:absolute;left:944px;top:861.8px;width:148px;height:2px;background:#666;"></div><div style="position:absolute;left:1014px;top:854px;width:8px;height:17px;background:#666;border-radius:1px;"></div><svg style="position:absolute;left:1098px;top:856px;" width="15" height="15" viewBox="0 0 15 15"><path d="M7.5 1.5 V13.5 M1.5 7.5 H13.5" stroke="#444" stroke-width="1.4"/></svg><div style="position:absolute;left:73.00px;top:31.00px;font-family:'Liberation Sans';font-size:15.3px;line-height:15.3px;font-weight:normal;font-style:normal;color:#57b57f;white-space:pre;">AutoSave</div><div style="position:absolute;left:158.25px;top:31.00px;font-family:'Liberation Sans';font-size:16px;line-height:16px;font-weight:normal;font-style:normal;color:#57b57f;white-space:pre;">On</div><div style="position:absolute;left:445.88px;top:32.00px;font-family:'Liberation Sans';font-size:16.8px;line-height:16.8px;font-weight:normal;font-style:normal;color:#57b57f;white-space:pre;">Zapier.xlsx</div><div style="position:absolute;left:548.97px;top:32.00px;font-family:'Liberation Sans';font-size:16.9px;line-height:16.9px;font-weight:normal;font-style:normal;color:#57b57f;white-space:pre;">Saved</div><div style="position:absolute;left:32.23px;top:89.00px;font-family:'Liberation Sans';font-size:19.5px;line-height:19.5px;font-weight:normal;font-style:normal;color:#242424;white-space:pre;">File</div><div style="position:absolute;left:100.84px;top:87.00px;font-family:'Liberation Sans';font-size:21.19px;line-height:21.19px;font-weight:normal;font-style:normal;color:#242424;white-space:pre;-webkit-text-stroke:0.5px #242424;">Home</div><div style="position:absolute;left:186.48px;top:89.00px;font-family:'Liberation Sans';font-size:19.5px;line-height:19.5px;font-weight:normal;font-style:normal;color:#242424;white-space:pre;">Insert</div><div style="position:absolute;left:265.48px;top:89.00px;font-family:'Liberation Sans';font-size:19.5px;line-height:19.5px;font-weight:normal;font-style:normal;color:#242424;white-space:pre;">Draw</div><div style="position:absolute;left:340.18px;top:89.00px;font-family:'Liberation Sans';font-size:19.5px;line-height:19.5px;font-weight:normal;font-style:normal;color:#242424;white-space:pre;">Page Layout</div><div style="position:absolute;left:475.48px;top:89.00px;font-family:'Liberation Sans';font-size:19.5px;line-height:19.5px;font-weight:normal;font-style:normal;color:#242424;white-space:pre;">Formulas</div><div style="position:absolute;left:583.48px;top:89.00px;font-family:'Liberation Sans';font-size:19.5px;line-height:19.5px;font-weight:normal;font-style:normal;color:#242424;white-space:pre;">Data</div><div style="position:absolute;left:652.48px;top:89.00px;font-family:'Liberation Sans';font-size:19.5px;line-height:19.5px;font-weight:normal;font-style:normal;color:#242424;white-space:pre;">Review</div><div style="position:absolute;left:742.00px;top:89.00px;font-family:'Liberation Sans';font-size:19.5px;line-height:19.5px;font-weight:normal;font-style:normal;color:#242424;white-space:pre;">View</div><div style="position:absolute;left:813.00px;top:89.00px;font-family:'Liberation Sans';font-size:19.5px;line-height:19.5px;font-weight:normal;font-style:normal;color:#242424;white-space:pre;">Automate</div><div style="position:absolute;left:925.48px;top:89.00px;font-family:'Liberation Sans';font-size:19.5px;line-height:19.5px;font-weight:normal;font-style:normal;color:#242424;white-space:pre;">Help</div><div style="position:absolute;left:995.00px;top:89.00px;font-family:'Liberation Sans';font-size:19.5px;line-height:19.5px;font-weight:normal;font-style:normal;color:#242424;white-space:pre;">Acrobat</div><div style="position:absolute;left:32.44px;top:181.00px;font-family:'Liberation Sans';font-size:18.4px;line-height:18.4px;font-weight:normal;font-style:normal;color:#242424;white-space:pre;">Clipboard</div><div style="position:absolute;left:146.56px;top:181.00px;font-family:'Liberation Sans';font-size:18.4px;line-height:18.4px;font-weight:normal;font-style:normal;color:#242424;white-space:pre;">Font</div><div style="position:absolute;left:219.00px;top:181.00px;font-family:'Liberation Sans';font-size:18.4px;line-height:18.4px;font-weight:normal;font-style:normal;color:#242424;white-space:pre;">Alignment</div><div style="position:absolute;left:327.56px;top:181.00px;font-family:'Liberation Sans';font-size:18.4px;line-height:18.4px;font-weight:normal;font-style:normal;color:#242424;white-space:pre;">Number</div><div style="position:absolute;left:454.64px;top:135.00px;font-family:'Liberation Sans';font-size:18.3px;line-height:18.3px;font-weight:normal;font-style:normal;color:#242424;white-space:pre;">Conditional Formatting</div><div style="position:absolute;left:454.12px;top:175.00px;font-family:'Liberation Sans';font-size:17.6px;line-height:17.6px;font-weight:normal;font-style:normal;color:#242424;white-space:pre;">Format as Table</div><div style="position:absolute;left:454.72px;top:215.00px;font-family:'Liberation Sans';font-size:16.6px;line-height:16.6px;font-weight:normal;font-style:normal;color:#242424;white-space:pre;">Cell Styles</div><div style="position:absolute;left:523.15px;top:247.00px;font-family:'Liberation Sans';font-size:14.5px;line-height:14.5px;font-weight:normal;font-style:normal;color:#242424;white-space:pre;">Styles</div><div style="position:absolute;left:703.74px;top:182.00px;font-family:'Liberation Sans';font-size:16.3px;line-height:16.3px;font-weight:normal;font-style:normal;color:#242424;white-space:pre;">Cells</div><div style="position:absolute;left:775.38px;top:181.00px;font-family:'Liberation Sans';font-size:18.2px;line-height:18.2px;font-weight:normal;font-style:normal;color:#242424;white-space:pre;">Editing</div><div style="position:absolute;left:861.60px;top:184.00px;font-family:'Liberation Sans';font-size:18.3px;line-height:18.3px;font-weight:normal;font-style:normal;color:#242424;white-space:pre;">Add-ins</div><div style="position:absolute;left:864.60px;top:246.00px;font-family:'Liberation Sans';font-size:15.6px;line-height:15.6px;font-weight:normal;font-style:normal;color:#242424;white-space:pre;">Add-ins</div><div style="position:absolute;left:988.90px;top:136.00px;font-family:'Liberation Sans';font-size:17.1px;line-height:17.1px;font-weight:normal;font-style:normal;color:#242424;white-space:pre;">Analyze Data</div><div style="position:absolute;left:988.03px;top:173.00px;font-family:'Liberation Sans';font-size:18.6px;line-height:18.6px;font-weight:normal;font-style:normal;color:#242424;white-space:pre;">Copilot</div><div style="position:absolute;left:20.45px;top:290.00px;font-family:'Liberation Sans';font-size:19.9px;line-height:19.9px;font-weight:normal;font-style:normal;color:#242424;white-space:pre;">D2</div><div style="position:absolute;left:345.76px;top:291.00px;font-family:'Liberation Mono';font-size:20px;line-height:20px;font-weight:normal;font-style:normal;color:#242424;white-space:pre;transform:scaleY(1.08);transform-origin:0 15px;">=IF(AND(NOT(ISBLANK(B2)),C2&gt;B2),NETWORKDAYS(B2,C2)-1,"")</div><div style="position:absolute;left:42.00px;top:334.00px;font-family:'Liberation Sans';font-size:18.5px;line-height:18.5px;font-weight:normal;font-style:normal;color:#242424;white-space:pre;width:121px;text-align:center;">A</div><div style="position:absolute;left:163.00px;top:334.00px;font-family:'Liberation Sans';font-size:18.5px;line-height:18.5px;font-weight:normal;font-style:normal;color:#242424;white-space:pre;width:148px;text-align:center;">B</div><div style="position:absolute;left:311.00px;top:334.00px;font-family:'Liberation Sans';font-size:18.5px;line-height:18.5px;font-weight:normal;font-style:normal;color:#242424;white-space:pre;width:155px;text-align:center;">C</div><div style="position:absolute;left:466.00px;top:334.00px;font-family:'Liberation Sans';font-size:18.5px;line-height:18.5px;font-weight:normal;font-style:normal;color:#1e6b47;white-space:pre;width:203px;text-align:center;">D</div><div style="position:absolute;left:669.00px;top:334.00px;font-family:'Liberation Sans';font-size:18.5px;line-height:18.5px;font-weight:normal;font-style:normal;color:#242424;white-space:pre;width:96px;text-align:center;">E</div><div style="position:absolute;left:765.00px;top:334.00px;font-family:'Liberation Sans';font-size:18.5px;line-height:18.5px;font-weight:normal;font-style:normal;color:#242424;white-space:pre;width:96px;text-align:center;">F</div><div style="position:absolute;left:861.00px;top:334.00px;font-family:'Liberation Sans';font-size:18.5px;line-height:18.5px;font-weight:normal;font-style:normal;color:#242424;white-space:pre;width:96px;text-align:center;">G</div><div style="position:absolute;left:957.00px;top:334.00px;font-family:'Liberation Sans';font-size:18.5px;line-height:18.5px;font-weight:normal;font-style:normal;color:#242424;white-space:pre;width:96px;text-align:center;">H</div><div style="position:absolute;left:1053.00px;top:334.00px;font-family:'Liberation Sans';font-size:18.5px;line-height:18.5px;font-weight:normal;font-style:normal;color:#242424;white-space:pre;width:96px;text-align:center;">I</div><div style="position:absolute;left:3.00px;top:389.00px;font-family:'Liberation Sans';font-size:19.3px;line-height:19.3px;font-weight:normal;font-style:normal;color:#242424;white-space:pre;width:39px;text-align:center;">1</div><div style="position:absolute;left:3.00px;top:418.00px;font-family:'Liberation Sans';font-size:19.3px;line-height:19.3px;font-weight:normal;font-style:normal;color:#1d6b48;white-space:pre;width:39px;text-align:center;">2</div><div style="position:absolute;left:3.00px;top:448.00px;font-family:'Liberation Sans';font-size:19.3px;line-height:19.3px;font-weight:normal;font-style:normal;color:#242424;white-space:pre;width:39px;text-align:center;">3</div><div style="position:absolute;left:3.00px;top:476.00px;font-family:'Liberation Sans';font-size:19.3px;line-height:19.3px;font-weight:normal;font-style:normal;color:#242424;white-space:pre;width:39px;text-align:center;">4</div><div style="position:absolute;left:3.00px;top:506.00px;font-family:'Liberation Sans';font-size:19.3px;line-height:19.3px;font-weight:normal;font-style:normal;color:#242424;white-space:pre;width:39px;text-align:center;">5</div><div style="position:absolute;left:3.00px;top:534.00px;font-family:'Liberation Sans';font-size:19.3px;line-height:19.3px;font-weight:normal;font-style:normal;color:#242424;white-space:pre;width:39px;text-align:center;">6</div><div style="position:absolute;left:3.00px;top:564.00px;font-family:'Liberation Sans';font-size:19.3px;line-height:19.3px;font-weight:normal;font-style:normal;color:#242424;white-space:pre;width:39px;text-align:center;">7</div><div style="position:absolute;left:3.00px;top:592.00px;font-family:'Liberation Sans';font-size:19.3px;line-height:19.3px;font-weight:normal;font-style:normal;color:#242424;white-space:pre;width:39px;text-align:center;">8</div><div style="position:absolute;left:3.00px;top:622.00px;font-family:'Liberation Sans';font-size:19.3px;line-height:19.3px;font-weight:normal;font-style:normal;color:#242424;white-space:pre;width:39px;text-align:center;">9</div><div style="position:absolute;left:3.00px;top:650.00px;font-family:'Liberation Sans';font-size:19.3px;line-height:19.3px;font-weight:normal;font-style:normal;color:#242424;white-space:pre;width:39px;text-align:center;">10</div><div style="position:absolute;left:3.00px;top:680.00px;font-family:'Liberation Sans';font-size:19.3px;line-height:19.3px;font-weight:normal;font-style:normal;color:#242424;white-space:pre;width:39px;text-align:center;">11</div><div style="position:absolute;left:3.00px;top:708.00px;font-family:'Liberation Sans';font-size:19.3px;line-height:19.3px;font-weight:normal;font-style:normal;color:#242424;white-space:pre;width:39px;text-align:center;">12</div><div style="position:absolute;left:3.00px;top:738.00px;font-family:'Liberation Sans';font-size:19.3px;line-height:19.3px;font-weight:normal;font-style:normal;color:#242424;white-space:pre;width:39px;text-align:center;">13</div><div style="position:absolute;left:3.00px;top:766.00px;font-family:'Liberation Sans';font-size:19.3px;line-height:19.3px;font-weight:normal;font-style:normal;color:#242424;white-space:pre;width:39px;text-align:center;">14</div><div style="position:absolute;left:45.09px;top:375.00px;font-family:'Liberation Sans';font-size:19.4px;line-height:19.4px;font-weight:bold;font-style:normal;color:#000;white-space:pre;">Name</div><div style="position:absolute;left:166.70px;top:375.00px;font-family:'Liberation Sans';font-size:19.1px;line-height:19.1px;font-weight:bold;font-style:normal;color:#000;white-space:pre;">Start Date</div><div style="position:absolute;left:314.39px;top:361.00px;font-family:'Liberation Sans';font-size:19.5px;line-height:19.5px;font-weight:bold;font-style:normal;color:#000;white-space:pre;">Orientation</div><div style="position:absolute;left:314.39px;top:390.00px;font-family:'Liberation Sans';font-size:19.5px;line-height:19.5px;font-weight:bold;font-style:normal;color:#000;white-space:pre;">Completed</div><div style="position:absolute;left:469.41px;top:375.00px;font-family:'Liberation Sans';font-size:19.0px;line-height:19.0px;font-weight:bold;font-style:normal;color:#000;white-space:pre;">Onboarding Duration</div><div style="position:absolute;left:44.75px;top:418.00px;font-family:'Liberation Sans';font-size:19.8px;line-height:19.8px;font-weight:normal;font-style:normal;color:#000;white-space:pre;">Bob</div><div style="position:absolute;left:46.30px;top:448.00px;font-family:'Liberation Sans';font-size:19.8px;line-height:19.8px;font-weight:normal;font-style:normal;color:#000;white-space:pre;">Alice</div><div style="position:absolute;left:45.37px;top:476.00px;font-family:'Liberation Sans';font-size:19.8px;line-height:19.8px;font-weight:normal;font-style:normal;color:#000;white-space:pre;">Carol</div><div style="position:absolute;left:44.75px;top:506.00px;font-family:'Liberation Sans';font-size:19.8px;line-height:19.8px;font-weight:normal;font-style:normal;color:#000;white-space:pre;">Dave</div><div style="position:absolute;left:227.04px;top:418.00px;font-family:'Liberation Sans';font-size:20.5px;line-height:20.5px;font-weight:normal;font-style:normal;color:#000;white-space:pre;">7/1/2025</div><div style="position:absolute;left:381.74px;top:418.00px;font-family:'Liberation Sans';font-size:20.5px;line-height:20.5px;font-weight:normal;font-style:normal;color:#000;white-space:pre;">7/3/2025</div><div style="position:absolute;left:227.04px;top:447.00px;font-family:'Liberation Sans';font-size:20.5px;line-height:20.5px;font-weight:normal;font-style:normal;color:#000;white-space:pre;">7/2/2025</div><div style="position:absolute;left:381.74px;top:447.00px;font-family:'Liberation Sans';font-size:20.5px;line-height:20.5px;font-weight:normal;font-style:normal;color:#000;white-space:pre;">7/7/2025</div><div style="position:absolute;left:227.04px;top:476.00px;font-family:'Liberation Sans';font-size:20.5px;line-height:20.5px;font-weight:normal;font-style:normal;color:#000;white-space:pre;">7/4/2025</div><div style="position:absolute;left:381.74px;top:505.00px;font-family:'Liberation Sans';font-size:20.5px;line-height:20.5px;font-weight:normal;font-style:normal;color:#000;white-space:pre;">7/6/2025</div><div style="position:absolute;left:653.74px;top:418.00px;font-family:'Liberation Sans';font-size:20.5px;line-height:20.5px;font-weight:normal;font-style:normal;color:#000;white-space:pre;">2</div><div style="position:absolute;left:654.06px;top:447.00px;font-family:'Liberation Sans';font-size:20.5px;line-height:20.5px;font-weight:normal;font-style:normal;color:#000;white-space:pre;">3</div><div style="position:absolute;left:730.88px;top:427.00px;font-family:'Liberation Sans';font-size:17.41px;line-height:17.41px;font-weight:normal;font-style:normal;color:#242424;white-space:pre;">Get Deeper Analysis Results using <u>P</u>ython</div><div style="position:absolute;left:730.34px;top:471.00px;font-family:'Liberation Sans';font-size:17.38px;line-height:17.38px;font-weight:normal;font-style:normal;color:#242424;white-space:pre;"><u>E</u>xplain this Formula</div><div style="position:absolute;left:731.15px;top:515.00px;font-family:'Liberation Sans';font-size:17.73px;line-height:17.73px;font-weight:normal;font-style:normal;color:#242424;white-space:pre;">Suggest a <u>F</u>ormula Column</div><div style="position:absolute;left:731.13px;top:558.00px;font-family:'Liberation Sans';font-size:18.14px;line-height:18.14px;font-weight:normal;font-style:normal;color:#242424;white-space:pre;">Suggest <u>C</u>onditional Formatting</div><div style="position:absolute;left:731.15px;top:603.00px;font-family:'Liberation Sans';font-size:17.65px;line-height:17.65px;font-weight:normal;font-style:normal;color:#242424;white-space:pre;"><u>S</u>ummarize using PivotTable or Chart</div><div style="position:absolute;left:731.42px;top:647.00px;font-family:'Liberation Sans';font-size:17.67px;line-height:17.67px;font-weight:normal;font-style:normal;color:#242424;white-space:pre;"><u>T</u>each Me Something About Excel</div><div style="position:absolute;left:731.70px;top:694.00px;font-family:'Liberation Sans';font-size:17.96px;line-height:17.96px;font-weight:normal;font-style:normal;color:#242424;white-space:pre;">Ask <u>C</u>opilot</div><div style="position:absolute;left:730.29px;top:738.00px;font-family:'Liberation Sans';font-size:18.0px;line-height:18.0px;font-weight:normal;font-style:normal;color:#242424;white-space:pre;"><u>H</u>ide until I Reopen this Document</div><div style="position:absolute;left:179.88px;top:815.00px;font-family:'Liberation Sans';font-size:19.9px;line-height:19.9px;font-weight:normal;font-style:normal;color:#242424;white-space:pre;">Sheet1</div><div style="position:absolute;left:278.35px;top:809.00px;font-family:'Liberation Sans';font-size:20.8px;line-height:20.8px;font-weight:normal;font-style:normal;color:#242424;white-space:pre;-webkit-text-stroke:0.45px #242424;">Sheet3</div><div style="position:absolute;left:381.80px;top:815.00px;font-family:'Liberation Sans';font-size:19.8px;line-height:19.8px;font-weight:normal;font-style:normal;color:#242424;white-space:pre;">Analysis1</div><div style="position:absolute;left:18.85px;top:857.00px;font-family:'Liberation Sans';font-size:14.7px;line-height:14.7px;font-weight:normal;font-style:normal;color:#333;white-space:pre;">Ready</div><div style="position:absolute;left:117.25px;top:856.00px;font-family:'Liberation Sans';font-size:15.8px;line-height:15.8px;font-weight:bold;font-style:normal;color:#242424;white-space:pre;">Accessibility: Investigate</div><div style="position:absolute;left:1130.02px;top:856.00px;font-family:'Liberation Sans';font-size:15.7px;line-height:15.7px;font-weight:normal;font-style:normal;color:#333;white-space:pre;">100%</div>
</div>
<div style="position:absolute;left:0;top:0;width:1201px;height:881px;box-sizing:border-box;border:2px solid #7f7c7c;border-radius:10px;"></div>
</body></html>
